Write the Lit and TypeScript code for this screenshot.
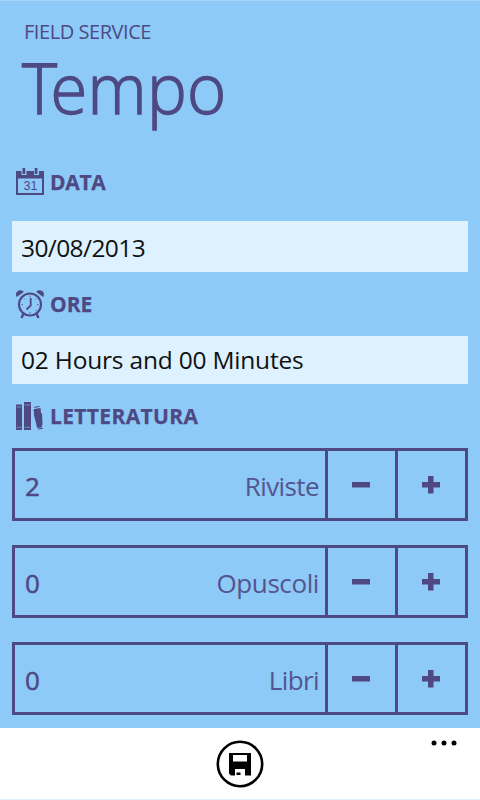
import { LitElement, html, css, svg } from "lit";
import { customElement, property, state } from "lit/decorators.js";

const calendarIcon = svg`
  <path d="M0 3h28v24H0z M2 10.500v14.500h24v-14.500z" fill-rule="evenodd" fill="#4e4983"/>
  <path d="M5.500 0h5v7h-5z M18 0h5v7h-5z" fill="#8dcaf8"/>
  <path d="M6.500 0h2.700v6H6.500z M18.700 0h2.700v6h-2.700z" fill="#4e4983"/>
  <text x="14.500" y="22" text-anchor="middle" font-size="12.500" fill="#4e4983" font-family="Liberation Sans, Arial, sans-serif">31</text>`;

const alarmIcon = svg`
  <g fill="none" stroke="#4e4983">
    <circle cx="14" cy="14.500" r="11" stroke-width="2.100"/>
    <path d="M14.700 8v7.500l-4.200 4" stroke-width="1.800"/>
    <path d="M7.500 23.500l-2 4.500M20.500 23.500l2 4.500" stroke-width="2.400"/>
    <path d="M14 5.500v1.500M14 22v1.500M5.500 14.500H7M21 14.500h1.500M8 8.500l1 1M20 8.500l-1 1M19.500 20l1 1" stroke-width=".8"/>
  </g>
  <path d="M.8 7C-1.200 3.500 1 .2 4.500.2c1.700 0 2.700.8 3.200 1.800zM27.200 7c2-3.500-.2-6.800-3.700-6.800-1.700 0-2.700.8-3.200 1.800z" fill="#4e4983"/>`;

const booksIcon = svg`
  <path d="M0 2.500h6V28H0zM8 0h7v28H8z" fill="#4e4983"/>
  <path d="M18 7l6.500-1 .5 5 1 1 .5 10-1 3.500-4.500.500-1-5-2-8z" fill="#4e4983"/>
  <path d="M.5 5h5M.5 25.300h5M8.500 3h6M8.500 25.300h6" stroke="#8dcaf8" stroke-width="1" opacity=".5"/>
  <path d="M18 5.300l5.500-.8M17.300 8.500h2M22 27.200l5-1" stroke="#4e4983" stroke-width="1" fill="none"/>`;

@customElement("section-title")
class SectionTitle extends LitElement {
  @property() icon = "";
  @property() label = "";
  @property({ type: Number }) spacing = 0;

  static styles = css`
    :host { display: flex; align-items: center; height: 30px; gap: 6px; padding-left: 16px; }
    .icon { width: 28px; height: 28px; flex: none; overflow: visible; }
    .label { font-weight: 700; font-size: 21px; line-height: 28px; color: #4e4983; -webkit-text-stroke: .25px #4e4983; }
  `;

  render() {
    const art = { calendar: calendarIcon, alarm: alarmIcon, books: booksIcon }[this.icon];
    return html`<svg class="icon" viewBox="0 0 28 28">${art}</svg>
      <span class="label" style="letter-spacing:${this.spacing}px">${this.label}</span>`;
  }
}

@customElement("counter-row")
class CounterRow extends LitElement {
  @property() label = "";
  @property({ type: Number }) value = 0;
  @property({ type: Number }) spacing = 0;

  static styles = css`
    :host { display: flex; box-sizing: border-box; height: 73px; border: 3px solid #4e4983; color: #4e4983; }
    .field { flex: 1; display: flex; justify-content: space-between; align-items: center; padding: 3px 6px 0 10px; font-size: 26px; line-height: 34px; }
    .value { font-weight: 500; font-size: 26px; -webkit-text-stroke: .5px #4e4983; }
    .label { opacity: .9; }
    .button { box-sizing: border-box; width: 70px; border: 0; border-left: 3px solid #4e4983; background: none; padding: 0 0 0 3px; display: flex; align-items: center; justify-content: flex-start; }
    .sign { width: 18px; height: 18px; margin-left: 21px; margin-top: 1px; fill: #4e4983; }
  `;

  render() {
    return html`
      <div class="field"><span class="value">${this.value}</span><span class="label" style="letter-spacing:${this.spacing}px">${this.label}</span></div>
      <button class="button" @click=${() => (this.value = Math.max(0, this.value - 1))}>
        <svg class="sign" viewBox="0 0 18 18"><path d="M0 6h18v5.500H0z"/></svg>
      </button>
      <button class="button" @click=${() => this.value++}>
        <svg class="sign" viewBox="0 0 18 18"><path d="M0 6h6V0h5.500v6H18v5.500h-6.500v6H6v-6H0z"/></svg>
      </button>`;
  }
}

@customElement("app-root")
class AppRoot extends LitElement {
  @state() private rows = [
    { label: "Riviste", value: 2, spacing: -0.6 },
    { label: "Opuscoli", value: 0, spacing: -0.4 },
    { label: "Libri", value: 0, spacing: -0.6 },
  ];

  static styles = css`
    :host { display: flex; flex-direction: column; box-sizing: border-box; width: 480px; height: 800px; overflow: hidden; background: #8dcaf8; border-top: 1px solid #a4d5f9; font-family: "Open Sans", "Noto Sans", sans-serif; color: #4e4983; }
    .app { font-size: 20px; line-height: 28px; padding: 17px 0 0 24px; letter-spacing: -.45px; height: 28px; }
    .title { margin: 0; font-weight: 300; font-size: 70px; line-height: 83px; height: 91px; padding-left: 22px; letter-spacing: .4px; -webkit-text-stroke: 1.400px #4e4983; transform: scaleX(.955); transform-origin: 22px 0; }
    .initial { letter-spacing: -7px; }
    .date-title { margin-top: 30px; }
    .input { margin: 0 12px; background: #def1ff; color: #111; font-size: 24.500px; padding-left: 9px; white-space: nowrap; }
    .date { margin-top: 24px; height: 51px; line-height: 54px; letter-spacing: -.6px; }
    .time-title { margin-top: 17px; }
    .time { margin-top: 17px; height: 48px; line-height: 48px; letter-spacing: -.2px; }
    .lit-title { margin-top: 17px; }
    .rows { display: flex; flex-direction: column; gap: 24px; margin: 17px 12px 0; }
    .bar { margin-top: 13px; flex: 1; background: #fff; border-bottom: 1px solid #def1ff; display: grid; grid-template-columns: 1fr 48px 1fr; padding-top: 12px; }
    .save { grid-column: 2; width: 48px; height: 48px; }
    .more { justify-self: end; width: 26px; height: 6px; margin-right: 23px; }
  `;

  render() {
    return html`
      <div class="app">FIELD SERVICE</div>
      <h1 class="title"><span class="initial">T</span>empo</h1>
      <section-title class="date-title" icon="calendar" label="DATA" spacing="-0.3"></section-title>
      <div class="input date">30/08/2013</div>
      <section-title class="time-title" icon="alarm" label="ORE" spacing="0"></section-title>
      <div class="input time">02 Hours and 00 Minutes</div>
      <section-title class="lit-title" icon="books" label="LETTERATURA" spacing="0.35"></section-title>
      <div class="rows">
        ${this.rows.map((r) => html`<counter-row .label=${r.label} .value=${r.value} .spacing=${r.spacing}></counter-row>`)}
      </div>
      <div class="bar">
        <svg class="save" viewBox="0 0 48 48">
          <circle cx="24" cy="24" r="22.200" fill="none" stroke="#000" stroke-width="2.600"/>
          <path fill-rule="evenodd" d="M13 13h22v22.500H15l-2-2zM17 15v6.500h14V15zM19 29v6.500h10V29z"/>
          <path d="M20.500 32.500h4v2.500h-4z"/>
        </svg>
        <svg class="more" viewBox="0 0 26 6">
          <circle cx="3" cy="3" r="2.500"/><circle cx="13" cy="3" r="2.500"/><circle cx="23" cy="3" r="2.500"/>
        </svg>
      </div>`;
  }
}
